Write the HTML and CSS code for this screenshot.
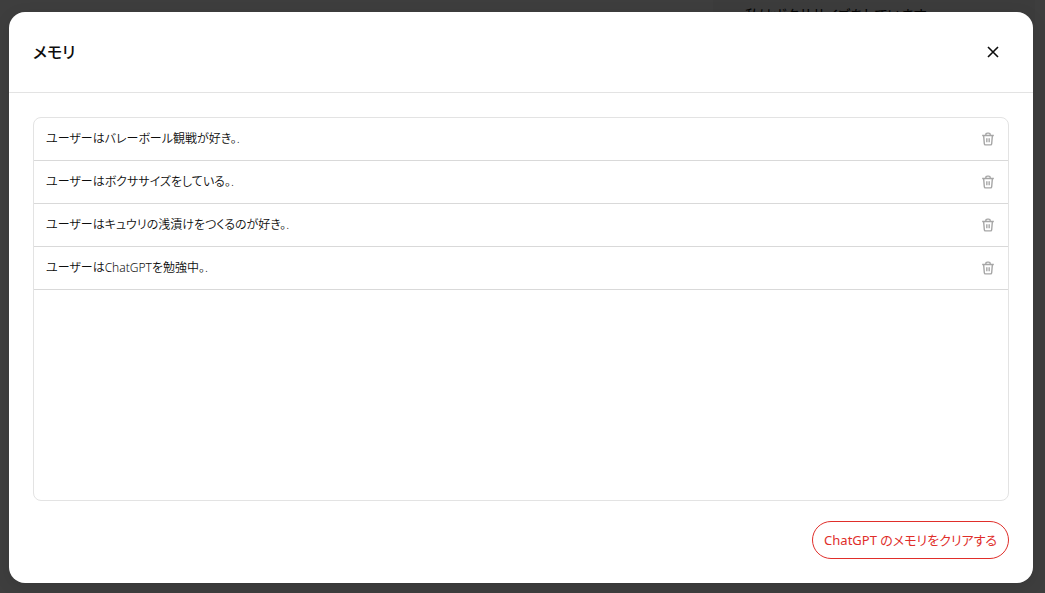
FILE: index.html
```html
<!DOCTYPE html>
<html lang="ja">
<head>
<meta charset="utf-8">
<meta name="viewport" content="width=device-width, initial-scale=1">
<title>メモリ</title>
<link rel="stylesheet" href="styles.css">
</head>
<body>
<svg class="symbols" aria-hidden="true">
  <symbol id="trash" viewBox="0 0 24 24"><path fill="none" stroke="currentColor" stroke-width="2.400" d="M2 6h20M4.500 6l1.200 14a2 2 0 0 0 2 2h8.600a2 2 0 0 0 2-2l1.200-14M8 6V5a3 3 0 0 1 3-3h2a3 3 0 0 1 3 3v1M10 10.500v7M14 10.500v7"/></symbol>
</svg>
<div class="page">
  <div class="chat" aria-hidden="true"><p class="bubble">私はボクササイズをしています</p></div>
  <section class="modal" role="dialog" aria-labelledby="title">
    <header class="modal-header">
      <h2 class="modal-title" id="title">メモリ</h2>
      <button class="icon-button close" type="button" aria-label="閉じる"><svg width="12" height="12" viewBox="0 0 12 12"><path d="M1 1l10 10M11 1L1 11" fill="none" stroke="currentColor" stroke-width="1.600"/></svg></button>
    </header>
    <div class="modal-body">
      <ul class="memories">
        <li class="memory"><span>ユーザーはバレーボール観戦が好き。.</span><button class="icon-button" type="button" aria-label="削除"><svg width="14" height="14"><use href="#trash"/></svg></button></li>
        <li class="memory"><span>ユーザーはボクササイズをしている。.</span><button class="icon-button" type="button" aria-label="削除"><svg width="14" height="14"><use href="#trash"/></svg></button></li>
        <li class="memory"><span>ユーザーはキュウリの浅漬けをつくるのが好き。.</span><button class="icon-button" type="button" aria-label="削除"><svg width="14" height="14"><use href="#trash"/></svg></button></li>
        <li class="memory"><span>ユーザーはChatGPTを勉強中。.</span><button class="icon-button" type="button" aria-label="削除"><svg width="14" height="14"><use href="#trash"/></svg></button></li>
      </ul>
      <button class="clear" type="button">ChatGPT のメモリをクリアする</button>
    </div>
  </section>
</div>
</body>
</html>
```

FILE: styles.css
```css
* {
  box-sizing: border-box;
}

body {
  margin: 0;
  background: #3e3e3e;
  color: #0d0d0d;
  font-family: "Noto Sans", "Noto Sans CJK JP", sans-serif;
  font-size: 12px;
  line-height: 20px;
  font-feature-settings: "palt";
}

button {
  font: inherit;
  font-feature-settings: inherit;
  cursor: pointer;
}

.symbols {
  display: none;
}

.page {
  display: flex;
  position: relative;
  min-height: 100vh;
  padding: 12px 12px 10px 9px;
}

.chat {
  position: absolute;
  top: 0;
  right: 10px;
  left: 713px;
  background: #3c3c3c;
}

.bubble {
  margin: 0;
  padding: 5px 0 0 32px;
  color: #030303;
  font-size: 14px;
  white-space: nowrap;
}

.modal {
  display: flex;
  position: relative;
  flex: 1;
  flex-direction: column;
  border-radius: 16px;
  background: #fff;
  box-shadow: 0 4px 16px rgba(0, 0, 0, 0.1);
}

.modal-header {
  display: flex;
  align-items: center;
  justify-content: space-between;
  padding: 24px;
  border-bottom: 1px solid #e3e3e3;
}

.modal-title {
  margin: 0;
  font-size: 16px;
  font-weight: 500;
  line-height: 32px;
}

.icon-button {
  display: flex;
  padding: 0;
  border: 0;
  background: none;
  color: #a6a6a6;
}

.close {
  padding: 10px;
  color: #0d0d0d;
}

.modal-body {
  display: flex;
  flex: 1;
  flex-direction: column;
  gap: 20px;
  padding: 24px;
}

.memories {
  flex: 1;
  margin: 0;
  padding: 0;
  border: 1px solid #e3e3e3;
  border-radius: 8px;
  list-style: none;
}

.memory {
  display: flex;
  align-items: center;
  justify-content: space-between;
  padding: 11px 13px 11px 12px;
  border-bottom: 1px solid #d9d9d9;
  font-weight: 350;
}

.clear {
  align-self: flex-end;
  padding: 8px 11px;
  border: 1px solid #e02e2a;
  border-radius: 20px;
  background: #fff;
  color: #e02e2a;
  font-size: 13px;
}
```
